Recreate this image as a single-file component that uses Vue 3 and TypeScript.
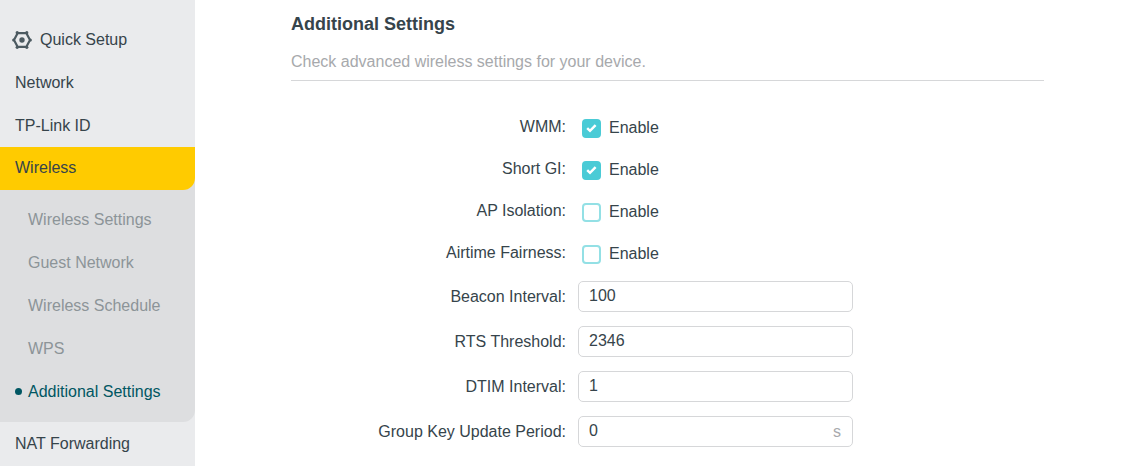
<script setup lang="ts">
import { reactive } from 'vue'

interface Toggle {
  id: string
  label: string
  enabled: boolean
}

interface Field {
  id: string
  label: string
  value: string
  unit?: string
}

const subItems: string[] = [
  'Wireless Settings',
  'Guest Network',
  'Wireless Schedule',
  'WPS',
  'Additional Settings',
]
const current = 'Additional Settings'

const toggles = reactive<Toggle[]>([
  { id: 'wmm', label: 'WMM:', enabled: true },
  { id: 'short-gi', label: 'Short GI:', enabled: true },
  { id: 'ap-isolation', label: 'AP Isolation:', enabled: false },
  { id: 'airtime', label: 'Airtime Fairness:', enabled: false },
])

const fields = reactive<Field[]>([
  { id: 'beacon', label: 'Beacon Interval:', value: '100' },
  { id: 'rts', label: 'RTS Threshold:', value: '2346' },
  { id: 'dtim', label: 'DTIM Interval:', value: '1' },
  { id: 'group-key', label: 'Group Key Update Period:', value: '0', unit: 's' },
])
</script>

<template>
  <div class="page">
    <nav class="sidebar">
      <a class="item with-icon" href="#">
        <svg class="gear" viewBox="0 0 20 20" aria-hidden="true">
          <path d="M5.6 3.2H14.4L18 10L14.4 16.8H5.6L2 10Z" fill="none" stroke="#4c5a61" stroke-width="2.2" stroke-linejoin="round" />
          <g fill="#4c5a61">
            <circle cx="5.2" cy="2.7" r="1.6" />
            <circle cx="14.8" cy="2.7" r="1.6" />
            <circle cx="1.6" cy="10" r="1.5" />
            <circle cx="18.4" cy="10" r="1.5" />
            <circle cx="5.2" cy="17.3" r="1.6" />
            <circle cx="14.8" cy="17.3" r="1.6" />
            <circle cx="10" cy="10" r="2.7" />
          </g>
        </svg>
        <span>Quick Setup</span>
      </a>
      <a class="item" href="#">Network</a>
      <a class="item" href="#">TP-Link ID</a>
      <div class="group">
        <a class="item active" href="#">Wireless</a>
        <div class="submenu">
          <a
            v-for="name in subItems"
            :key="name"
            class="subitem"
            :class="{ current: name === current }"
            href="#"
          >{{ name }}</a>
        </div>
      </div>
      <a class="item" href="#">NAT Forwarding</a>
    </nav>

    <main class="content">
      <header class="heading">
        <h1>Additional Settings</h1>
        <p>Check advanced wireless settings for your device.</p>
      </header>
      <form class="form" @submit.prevent>
        <div v-for="t in toggles" :key="t.id" class="row toggle-row">
          <label class="label" :for="t.id">{{ t.label }}</label>
          <label class="check" :for="t.id">
            <input :id="t.id" v-model="t.enabled" type="checkbox" />
            <span class="box">
              <svg v-if="t.enabled" viewBox="0 0 19 19" aria-hidden="true">
                <path d="M5.2 9.2L8 11.8L13.6 6.2" fill="none" stroke="#fff" stroke-width="2.5" />
              </svg>
            </span>
            <span>Enable</span>
          </label>
        </div>
        <div v-for="f in fields" :key="f.id" class="row field-row">
          <label class="label" :for="f.id">{{ f.label }}</label>
          <div class="field">
            <input :id="f.id" v-model="f.value" type="text" />
            <span v-if="f.unit" class="unit">{{ f.unit }}</span>
          </div>
        </div>
      </form>
    </main>
  </div>
</template>

<style>
body {
  margin: 0;
  background: #fff;
}
</style>

<style scoped>
.page {
  display: flex;
  min-height: 100vh;
  font: 16px/20px "Liberation Sans", Arial, sans-serif;
  color: #36444b;
}
.sidebar {
  box-sizing: border-box;
  flex: 0 0 195px;
  padding-top: 18px;
  background: #eaebed;
}
.item,
.subitem {
  box-sizing: border-box;
  display: flex;
  align-items: center;
  height: 43px;
  padding: 0 15px;
  color: #36444b;
  text-decoration: none;
}
.with-icon {
  gap: 8px;
  padding-left: 12px;
}
.gear {
  width: 20px;
  height: 20px;
}
.group {
  background: #dddee0;
  border-bottom-right-radius: 12px;
}
.active {
  padding-bottom: 2px;
  background: #ffcb00;
  border-bottom-right-radius: 12px;
}
.submenu {
  padding: 8px 0 9px;
}
.subitem {
  padding-left: 28px;
  color: #8c9498;
}
.current {
  gap: 6px;
  padding-left: 15px;
  color: #005662;
}
.current::before {
  content: "";
  width: 7px;
  height: 7px;
  border-radius: 50%;
  background: currentColor;
}
.content {
  flex: 1;
  min-width: 0;
  padding: 0 93px 0 96px;
}
.heading {
  padding: 14px 0 8px;
  border-bottom: 1px solid #d6d7d9;
}
h1 {
  margin: 0;
  font-size: 18px;
  line-height: 20px;
}
p {
  margin: 18px 0 0;
  color: #a7a9ac;
}
.form {
  padding-top: 25px;
}
.row {
  display: grid;
  grid-template-columns: 275px 275px;
  column-gap: 12px;
  align-items: center;
}
.toggle-row {
  height: 42px;
}
.field-row {
  height: 45px;
}
.label {
  text-align: right;
}
.check {
  position: relative;
  display: flex;
  align-items: center;
  gap: 8px;
  padding: 2px 0 0 4px;
  justify-self: start;
}
.check input {
  position: absolute;
  width: 19px;
  height: 19px;
  margin: 0;
  opacity: 0;
}
.box {
  box-sizing: border-box;
  width: 19px;
  height: 19px;
  border: 2px solid #93e0e5;
  border-radius: 4px;
  background: #fff;
}
.box svg {
  display: block;
  width: 19px;
  height: 19px;
  margin: -2px;
}
.check input:checked + .box {
  border-color: #4acbd6;
  background: #4acbd6;
}
.field {
  box-sizing: border-box;
  display: flex;
  align-items: center;
  height: 31px;
  padding: 0 11px 0 10px;
  border: 1px solid #d6d7d9;
  border-radius: 5px;
}
.field input {
  flex: 1;
  min-width: 0;
  padding: 0 0 2px;
  border: 0;
  outline: 0;
  background: none;
  color: inherit;
  font: inherit;
}
.unit {
  color: #a7a9ac;
}
</style>
